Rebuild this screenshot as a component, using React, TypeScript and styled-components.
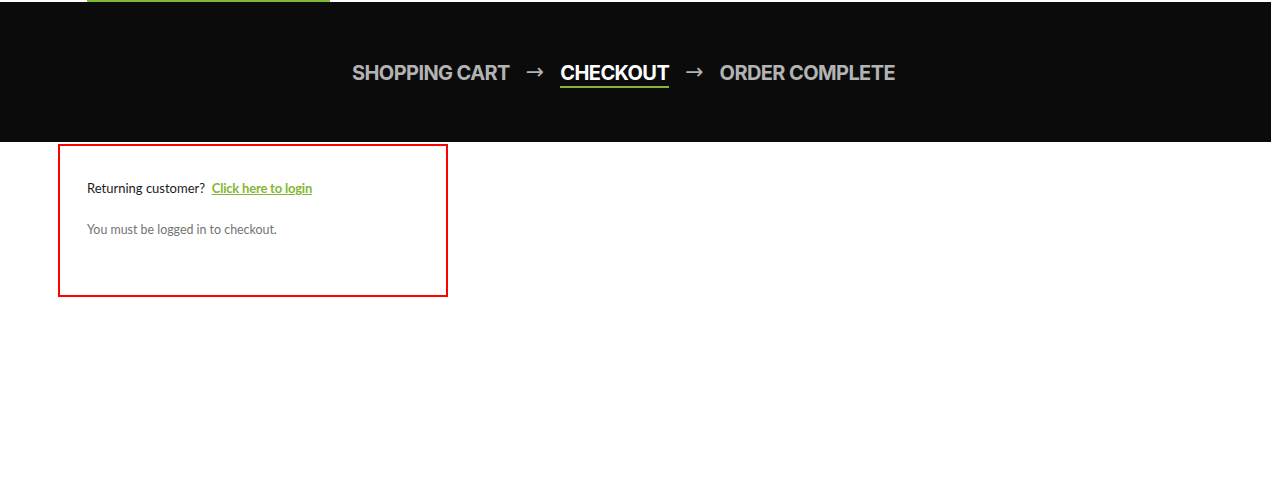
import React from "react";
import styled, { createGlobalStyle } from "styled-components";

const GlobalStyle = createGlobalStyle`
  body {
    margin: 0;
    background: #ffffff;
    font-family: "Lato", "Liberation Sans", sans-serif;
  }
`;

const steps = [
  { label: "SHOPPING CART", active: false },
  { label: "CHECKOUT", active: true },
  { label: "ORDER COMPLETE", active: false },
];

const App = () => {
  return (
    <Page>
      <GlobalStyle />
      <TopStrip>
        <AccentBar />
      </TopStrip>
      <Header>
        <Steps>
          {steps.map((step, i) => (
            <React.Fragment key={step.label}>
              {i > 0 ? <Arrow>→</Arrow> : null}
              <Step $active={step.active}>{step.label}</Step>
            </React.Fragment>
          ))}
        </Steps>
      </Header>
      <Content>
        <NoticeBox>
          <LoginLine>
            Returning customer?&nbsp; <LoginLink href="#">Click here to login</LoginLink>
          </LoginLine>
          <Message>You must be logged in to checkout.</Message>
        </NoticeBox>
      </Content>
    </Page>
  );
};

const Page = styled.div`
  width: 100%;
  min-height: 485px;
`;

const TopStrip = styled.div`
  height: 2px;
  padding-left: 87px;
  background: #ffffff;
`;

const AccentBar = styled.div`
  width: 243px;
  height: 2px;
  background: #82b735;
`;

const Header = styled.div`
  height: 140px;
  background: #0b0b0b;
  display: flex;
  align-items: center;
  justify-content: center;
  padding-right: 24px;
`;

const Steps = styled.div`
  display: flex;
  align-items: center;
  gap: 16px;
  margin-top: 4px;
`;

const Step = styled.span<{ $active: boolean }>`
  font-family: "Inter", "Open Sans", sans-serif;
  font-weight: 700;
  font-size: 20px;
  letter-spacing: -0.6px;
  color: ${(p) => (p.$active ? "#ffffff" : "#b3b3b3")};
  padding-bottom: 1px;
  border-bottom: 2px solid ${(p) => (p.$active ? "#82b735" : "transparent")};
`;

const Arrow = styled.span`
  font-family: "DejaVu Sans", sans-serif;
  font-size: 22px;
  color: #b3b3b3;
  padding-bottom: 5px;
`;

const Content = styled.div`
  padding: 2px 0 0 58px;
`;

const NoticeBox = styled.div`
  width: 390px;
  height: 153px;
  box-sizing: border-box;
  border: 2px solid #ff0000;
  padding: 33px 27px 0;
`;

const LoginLine = styled.p`
  margin: 0 0 24px;
  font-size: 13px;
  line-height: 18px;
  color: #1a1a1a;
`;

const LoginLink = styled.a`
  color: #82b735;
  font-weight: 700;
  letter-spacing: -0.2px;
  text-decoration: underline;
`;

const Message = styled.p`
  margin: 0;
  font-size: 12.4px;
  line-height: 18px;
  color: #737373;
`;

export default App;
